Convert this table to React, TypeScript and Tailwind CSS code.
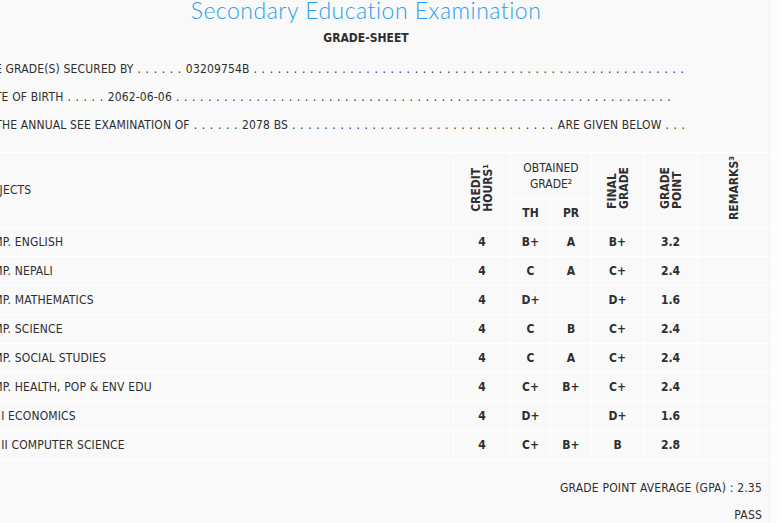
const rows = [
  { name: 'COMP. ENGLISH', ch: '4', th: 'B+', pr: 'A', fg: 'B+', gp: '3.2' },
  { name: 'COMP. NEPALI', ch: '4', th: 'C', pr: 'A', fg: 'C+', gp: '2.4' },
  { name: 'COMP. MATHEMATICS', ch: '4', th: 'D+', pr: '', fg: 'D+', gp: '1.6' },
  { name: 'COMP. SCIENCE', ch: '4', th: 'C', pr: 'B', fg: 'C+', gp: '2.4' },
  { name: 'COMP. SOCIAL STUDIES', ch: '4', th: 'C', pr: 'A', fg: 'C+', gp: '2.4' },
  { name: 'COMP. HEALTH, POP & ENV EDU', ch: '4', th: 'C+', pr: 'B+', fg: 'C+', gp: '2.4' },
  { name: 'OPT.I ECONOMICS', ch: '4', th: 'D+', pr: '', fg: 'D+', gp: '1.6' },
  { name: 'OPT.II COMPUTER SCIENCE', ch: '4', th: 'C+', pr: 'B+', fg: 'B', gp: '2.8' },
];

function Dots({ n }: { n: number }) {
  return <span className="tracking-[0.6px]">{Array(n).fill('.').join(' ')}</span>;
}

function Vertical({ children }: { children: React.ReactNode }) {
  return (
    <div className="inline-block rotate-180 [writing-mode:vertical-rl] text-left leading-[12px] font-bold">
      {children}
    </div>
  );
}

export default function App() {
  return (
    <div className="w-[781px] h-[523px] overflow-hidden bg-[#f9f9f9] flex text-[#2e2e2e] text-[12px] font-['DejaVu_Sans_Condensed','DejaVu_Sans',sans-serif]">
      <div className="w-[769px] shrink-0 overflow-hidden">
        <div className="-ml-[37px] w-[806px]">
          <h1 className="h-[20px] flex items-center justify-center text-[23px] leading-none text-[#2a9df4] font-['Lato',sans-serif] font-light tracking-[0.5px]">
            Secondary Education Examination
          </h1>
          <div className="h-[35px] flex items-center justify-center font-bold">GRADE-SHEET</div>
          <div className="pl-[17px] flex flex-col tracking-[0.15px]">
            <p className="h-[28px] flex items-center whitespace-nowrap gap-[4px]">
              THE GRADE(S) SECURED BY <Dots n={6} /> 03209754B <Dots n={54} />
            </p>
            <p className="h-[28px] flex items-center whitespace-nowrap gap-[4px]">
              DATE OF BIRTH <Dots n={5} /> 2062-06-06 <Dots n={62} />
            </p>
            <p className="h-[28px] flex items-center whitespace-nowrap gap-[4px]">
              IN THE ANNUAL SEE EXAMINATION OF <Dots n={6} /> 2078 BS <Dots n={33} /> ARE GIVEN BELOW <Dots n={3} />
            </p>
          </div>
          <table className="mt-[13px] w-[806px] table-fixed border-collapse">
            <colgroup>
              <col className="w-[490px]" />
              <col className="w-[57px]" />
              <col className="w-[40px]" />
              <col className="w-[41px]" />
              <col className="w-[52px]" />
              <col className="w-[54px]" />
              <col className="w-[72px]" />
            </colgroup>
            <thead>
              <tr className="h-[46px]">
                <th rowSpan={2} className="border border-white text-left font-normal pl-[13px] tracking-[0.15px]">
                  SUBJECTS
                </th>
                <th rowSpan={2} className="border border-white">
                  <Vertical>
                    CREDIT
                    <br />
                    HOURS¹
                  </Vertical>
                </th>
                <th colSpan={2} className="border border-white font-normal leading-[16px]">
                  OBTAINED
                  <br />
                  GRADE²
                </th>
                <th rowSpan={2} className="border border-white">
                  <Vertical>
                    FINAL
                    <br />
                    GRADE
                  </Vertical>
                </th>
                <th rowSpan={2} className="border border-white">
                  <Vertical>
                    GRADE
                    <br />
                    POINT
                  </Vertical>
                </th>
                <th rowSpan={2} className="border border-white">
                  <Vertical>REMARKS³</Vertical>
                </th>
              </tr>
              <tr className="h-[29px]">
                <th className="border border-white font-bold">TH</th>
                <th className="border border-white font-bold">PR</th>
              </tr>
            </thead>
            <tbody>
              {rows.map((r) => (
                <tr key={r.name} className="h-[29px]">
                  <td className="border border-white pl-[13px] whitespace-nowrap tracking-[0.15px]">{r.name}</td>
                  <td className="border border-white text-center font-bold">{r.ch}</td>
                  <td className="border border-white text-center font-bold">{r.th}</td>
                  <td className="border border-white text-center font-bold">{r.pr}</td>
                  <td className="border border-white text-center font-bold">{r.fg}</td>
                  <td className="border border-white text-center font-bold">{r.gp}</td>
                  <td className="border border-white"></td>
                </tr>
              ))}
            </tbody>
          </table>
          <div className="pr-[7px] flex flex-col items-end tracking-[0.2px]">
            <p className="h-[28px] mt-[14px] flex items-center">GRADE POINT AVERAGE (GPA) : 2.35</p>
            <p className="h-[26px] flex items-center">PASS</p>
          </div>
        </div>
      </div>
      <div className="flex-1 bg-[#fdfdfd] border-l border-[#efefef]" />
    </div>
  );
}
